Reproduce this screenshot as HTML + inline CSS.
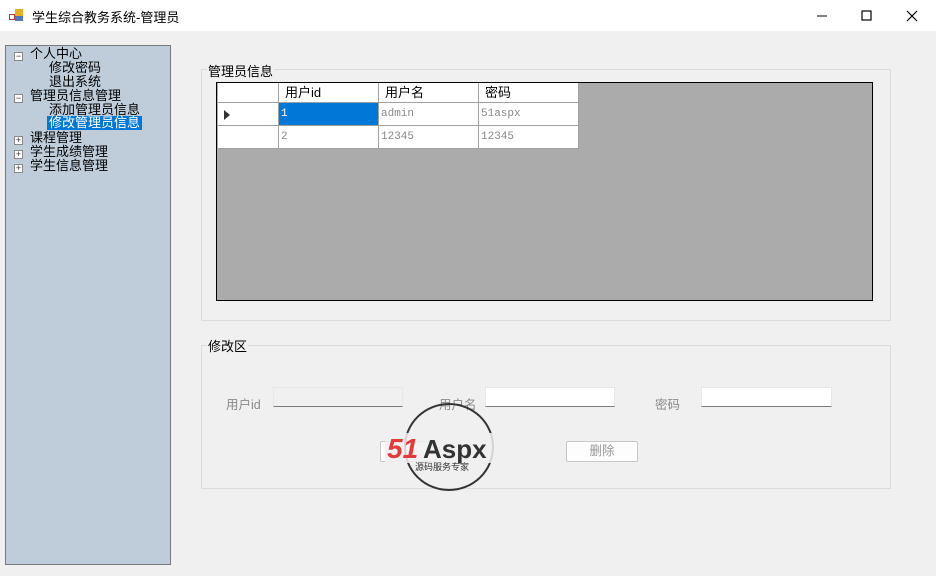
<!DOCTYPE html>
<html><head><meta charset="utf-8"><style>
*{margin:0;padding:0;box-sizing:border-box}
body{width:936px;height:576px;background:#f0f0f0;font-family:"Liberation Sans","Noto Sans CJK SC",sans-serif;font-size:12px;color:#000;position:relative;overflow:hidden}
.a{position:absolute}
.title{left:0;top:0;width:936px;height:31px;background:#fff}
.tree{left:5px;top:45px;width:166px;height:520px;background:#bfcddb;border:1px solid #7a7a7a}
.tree div{position:absolute;white-space:nowrap;font-size:13px;line-height:14px}
.pm{position:absolute;width:9px;height:9px;border:1px solid #8a8a8a;background:#fff;font-size:9px;line-height:7px;text-align:center;color:#333}
.gb{border:1px solid #dcdcdc}
.lbl{background:#f0f0f0;padding:0 1px;font-size:13px}
.grid{left:216px;top:82px;width:657px;height:219px;background:#ababab;border:1px solid #000}
.c{position:absolute;background:#fff;border-right:1px solid #a0a0a0;border-bottom:1px solid #a0a0a0;font-size:11px;padding-left:2px;line-height:22px;color:#888;font-family:"Liberation Mono","Noto Sans CJK SC",monospace}
.h{color:#000;font-size:13px;line-height:19px;padding-left:6px;font-family:"Liberation Sans","Noto Sans CJK SC",sans-serif}
.in{position:absolute;height:20px;background:#fff;border-bottom:1px solid #7a7a7a;border-top:1px solid #e8e8e8;border-left:1px solid #e8e8e8;border-right:1px solid #e8e8e8}
.fl{position:absolute;color:#8a8a8a;font-size:12.5px}
.btn{position:absolute;border:1px solid #c8c8c8;background:#fdfdfd;border-radius:2px;color:#999;text-align:center;line-height:18px;font-size:12.5px}
</style></head><body>
<div class="a title">
 <svg class="a" style="left:9px;top:8px" width="16" height="14"><rect x="0" y="6" width="6" height="6" fill="#b33"/><rect x="1" y="7" width="4" height="4" fill="#fff"/><rect x="6" y="1" width="8" height="7" fill="#e8b020"/><rect x="6" y="8" width="8" height="5" fill="#4a7ac0"/></svg>
 <div class="a" style="left:32px;top:7px;font-size:13px">学生综合教务系统-管理员</div>
 <svg class="a" style="left:815px;top:9px" width="110" height="14"><line x1="2" y1="7" x2="12" y2="7" stroke="#000"/><rect x="47" y="2" width="9" height="9" fill="none" stroke="#000" stroke-width="1.2"/><path d="M92 2 L102 12 M102 2 L92 12" stroke="#000" stroke-width="1.2"/></svg>
</div>
<div class="a tree">
 <span class="pm" style="left:8px;top:6px">−</span><div style="left:24px;top:1px">个人中心</div>
 <div style="left:43px;top:15px">修改密码</div>
 <div style="left:43px;top:29px">退出系统</div>
 <span class="pm" style="left:8px;top:48px">−</span><div style="left:24px;top:43px">管理员信息管理</div>
 <div style="left:43px;top:57px">添加管理员信息</div>
 <div style="left:41px;top:70px;background:#0078d7;color:#fff;padding:0 2px">修改管理员信息</div>
 <span class="pm" style="left:8px;top:90px">+</span><div style="left:24px;top:85px">课程管理</div>
 <span class="pm" style="left:8px;top:104px">+</span><div style="left:24px;top:99px">学生成绩管理</div>
 <span class="pm" style="left:8px;top:118px">+</span><div style="left:24px;top:113px">学生信息管理</div>
</div>
<div class="a gb" style="left:201px;top:69px;width:690px;height:252px"></div>
<div class="a lbl" style="left:207px;top:61px">管理员信息</div>
<div class="a grid">
 <div class="c h" style="left:1px;top:0;width:61px;height:20px"></div>
 <div class="c h" style="left:62px;top:0;width:100px;height:20px">用户id</div>
 <div class="c h" style="left:162px;top:0;width:100px;height:20px">用户名</div>
 <div class="c h" style="left:262px;top:0;width:100px;height:20px">密码</div>
 <div class="c" style="left:1px;top:20px;width:61px;height:23px"><span style="display:inline-block;margin:7px 0 0 4px;border-left:6px solid #333;border-top:5px solid transparent;border-bottom:5px solid transparent;vertical-align:top"></span></div>
 <div class="c" style="left:62px;top:20px;width:100px;height:23px;background:#0078d7;color:#fff">1</div>
 <div class="c" style="left:162px;top:20px;width:100px;height:23px">admin</div>
 <div class="c" style="left:262px;top:20px;width:100px;height:23px">51aspx</div>
 <div class="c" style="left:1px;top:43px;width:61px;height:23px"></div>
 <div class="c" style="left:62px;top:43px;width:100px;height:23px">2</div>
 <div class="c" style="left:162px;top:43px;width:100px;height:23px">12345</div>
 <div class="c" style="left:262px;top:43px;width:100px;height:23px">12345</div>
</div>
<div class="a gb" style="left:201px;top:345px;width:690px;height:144px"></div>
<div class="a lbl" style="left:207px;top:336px">修改区</div>
<div class="fl" style="left:226px;top:394px">用户id</div>
<div class="in" style="left:273px;top:387px;width:130px;background:#f0f0f0"></div>
<div class="fl" style="left:439px;top:394px">用户名</div>
<div class="in" style="left:485px;top:387px;width:130px"></div>
<div class="fl" style="left:655px;top:394px">密码</div>
<div class="in" style="left:701px;top:387px;width:131px"></div>
<div class="btn" style="left:380px;top:441px;width:56px;height:21px"></div>
<div class="btn" style="left:566px;top:441px;width:72px;height:21px">删除</div>
<svg class="a" style="left:385px;top:400px" width="130" height="95">
 <ellipse cx="64" cy="47" rx="44" ry="43" fill="none" stroke="#333" stroke-width="2"/>
 <rect x="0" y="33" width="128" height="30" fill="#f0f0f0" opacity="0.85"/>
 <text x="2" y="58" font-family="Liberation Sans" font-weight="bold" font-style="italic" font-size="28" fill="#e63a3a">51</text>
 <text x="38" y="58" font-family="Liberation Sans" font-weight="bold" font-size="26" fill="#333">Aspx</text>
 <text x="30" y="70" font-family="Noto Sans CJK SC" font-size="9" fill="#333">源码服务专家</text>
</svg>
</body></html>
